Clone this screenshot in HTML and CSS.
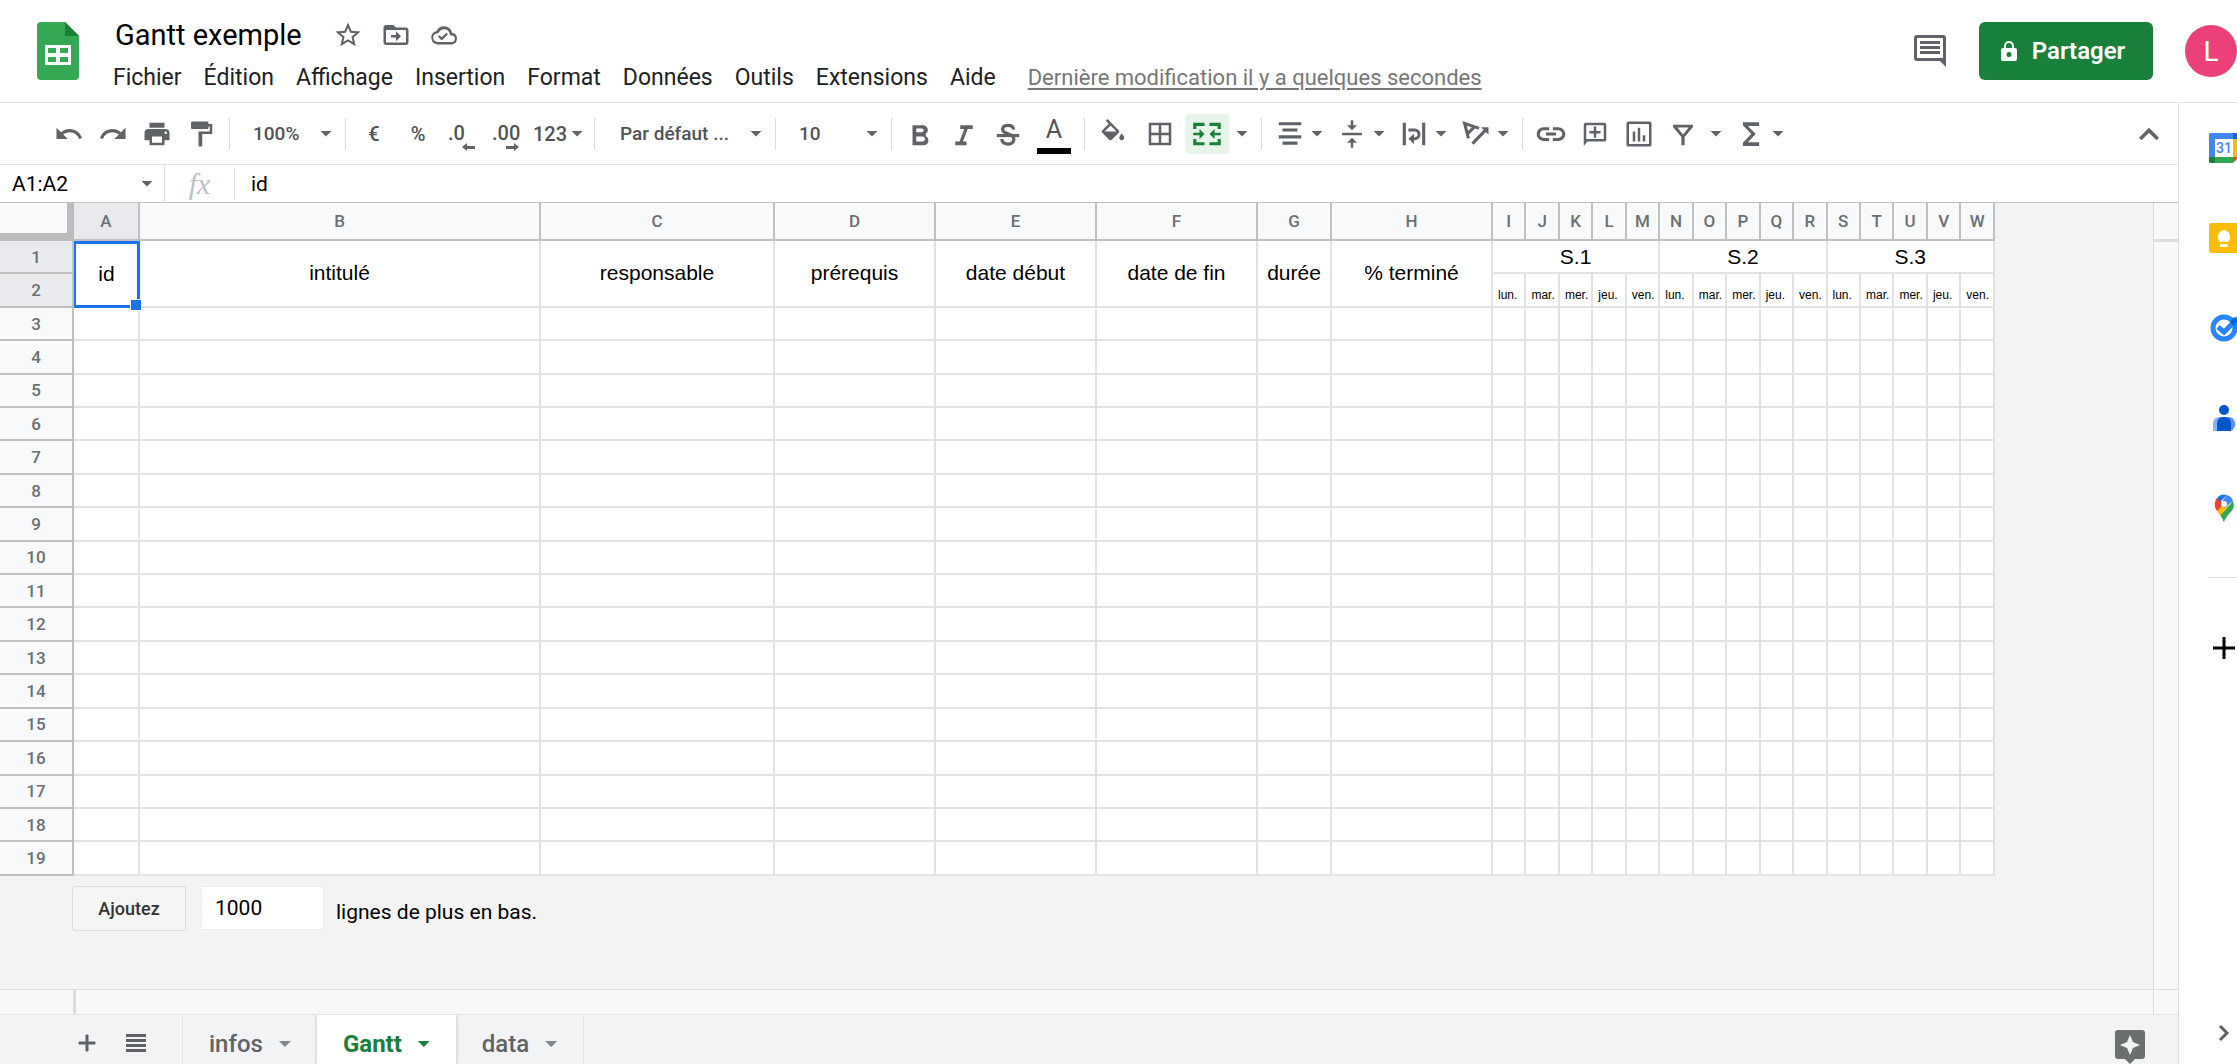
FILE: index.html
```html
<!DOCTYPE html>
<html lang="fr">
<head>
<meta charset="utf-8">
<title>Gantt exemple</title>
<link rel="stylesheet" href="styles.css">
</head>
<body>
<header class="header">
  <svg class="logo" viewBox="0 0 42 58" aria-hidden="true"><path fill="#34a853" d="M4 0h24l14 14v40a4 4 0 0 1-4 4H4a4 4 0 0 1-4-4V4a4 4 0 0 1 4-4z"/><path fill="#188038" d="M28 0l14 14H28z"/><path fill="#fff" d="M8 23h26v20H8zM11 26v5h8v-5zm12 0v5h8v-5zM11 35v5h8v-5zm12 0v5h8v-5z" fill-rule="evenodd"/></svg>
  <div class="doc">
    <div class="doc-title">
      <input class="title" type="text" value="Gantt exemple" aria-label="Nom du document">
      <button class="plain" aria-label="Suivre"><svg class="icon" viewBox="0 0 24 24"><path d="M22 9.240l-7.190-.620L12 2 9.190 8.630 2 9.240l5.460 4.730L5.820 21 12 17.270 18.180 21l-1.630-7.030L22 9.240zM12 15.400l-3.760 2.270 1-4.280-3.320-2.880 4.380-.380L12 6.100l1.710 4.040 4.380.380-3.320 2.880 1 4.280L12 15.400z"/></svg></button>
      <button class="plain" aria-label="Déplacer"><svg class="icon" viewBox="0 0 24 24"><path d="M20 6h-8l-2-2H4c-1.100 0-2 .9-2 2v12c0 1.100.9 2 2 2h16c1.100 0 2-.9 2-2V8c0-1.100-.9-2-2-2zm0 12H4V8h16v10zm-8-1l4-4-4-4v3H8v2h4z"/></svg></button>
      <button class="plain" aria-label="État du document"><svg class="icon" viewBox="0 0 24 24"><path d="M18.500 10.200A6.800 6.800 0 0 0 12 5a6.800 6.800 0 0 0-6 3.700A5.500 5.500 0 0 0 6.800 19.500h11.400a4.700 4.700 0 0 0 .3-9.300zM18 17.500H7a3.500 3.500 0 0 1-.3-7l.9-.1.4-.8A4.700 4.700 0 0 1 16.600 11l.3 1.200 1.300.1A2.600 2.600 0 0 1 18 17.500zm-7.800-3.700l-1.700-1.700-1.300 1.300 3 3 5-5-1.300-1.300z"/></svg></button>
    </div>
    <nav class="menus">
      <button class="menu">Fichier</button><button class="menu">Édition</button><button class="menu">Affichage</button><button class="menu">Insertion</button><button class="menu">Format</button><button class="menu">Données</button><button class="menu">Outils</button><button class="menu">Extensions</button><button class="menu">Aide</button>
      <a class="last-edit" href="#">Dernière modification il y a quelques secondes</a>
    </nav>
  </div>
  <div class="account">
    <button class="plain" aria-label="Commentaires"><svg class="icon-comments" viewBox="0 0 32 32"><path fill-rule="evenodd" d="M3 0h26a3 3 0 0 1 3 3v29l-6-6H3a3 3 0 0 1-3-3V3a3 3 0 0 1 3-3zm0 3v20h26V3zM6 6h20v3H6zm0 5h20v3H6zm0 5h20v3H6z"/></svg></button>
    <button class="share"><svg class="icon-lock" viewBox="0 0 16 20"><path fill-rule="evenodd" d="M2 7h1V5a5 5 0 0 1 10 0v2h1a2 2 0 0 1 2 2v9a2 2 0 0 1-2 2H2a2 2 0 0 1-2-2V9a2 2 0 0 1 2-2zm3 0h6V5a3 3 0 0 0-6 0zm3 4a2 2 0 1 0 0 5 2 2 0 0 0 0-5z"/></svg>Partager</button>
    <button class="avatar" aria-label="Compte">L</button>
  </div>
</header>

<div class="workspace">
  <main class="editor">
    <div class="toolbar">
      <button class="tool" aria-label="Annuler"><svg class="icon" viewBox="0 0 24 24"><path d="M12.500 8c-2.650 0-5.050.99-6.900 2.600L2 7v9h9l-3.620-3.620c1.390-1.160 3.160-1.880 5.120-1.880 3.540 0 6.550 2.310 7.600 5.500l2.370-.78C21.080 11.030 17.150 8 12.500 8z"/></svg></button>
      <button class="tool" aria-label="Rétablir"><svg class="icon" viewBox="0 0 24 24"><path d="M18.400 10.600C16.550 8.990 14.150 8 11.500 8c-4.650 0-8.580 3.030-9.960 7.220L3.900 16c1.050-3.190 4.050-5.500 7.600-5.500 1.950 0 3.730.72 5.120 1.880L13 16h9V7l-3.600 3.600z"/></svg></button>
      <button class="tool" aria-label="Imprimer"><svg class="icon" viewBox="0 0 24 24"><path d="M19 8H5c-1.660 0-3 1.340-3 3v6h4v4h12v-4h4v-6c0-1.660-1.340-3-3-3zm-3 11H8v-5h8v5zm3-7c-.55 0-1-.45-1-1s.45-1 1-1 1 .45 1 1-.45 1-1 1zm-1-9H6v4h12V3z"/></svg></button>
      <button class="tool" aria-label="Copier la mise en forme"><svg class="icon" viewBox="0 0 24 24"><path d="M18 4V3c0-.55-.45-1-1-1H5c-.55 0-1 .45-1 1v4c0 .55.45 1 1 1h12c.55 0 1-.45 1-1V6h1v4H10v11c0 .55.45 1 1 1h1c.55 0 1-.45 1-1v-9h8V4h-3z"/></svg></button>
      <span class="sep"></span>
      <span class="picker picker-short"><select aria-label="Zoom"><option>100%</option></select></span>
      <span class="sep"></span>
      <button class="tool">€</button>
      <button class="tool">%</button>
      <button class="tool tool-decimal" aria-label="Moins de décimales">.0<svg class="icon-arrow" viewBox="0 0 14 8"><path d="M0 4l5-4v3h8v3H5v2z"/></svg></button>
      <button class="tool tool-decimal" aria-label="Plus de décimales">.00<svg class="icon-arrow" viewBox="0 0 14 8"><path d="M13 4L8 0v3H0v3h8v2z"/></svg></button>
      <button class="tool tool-format">123<span class="caret"></span></button>
      <span class="sep"></span>
      <span class="picker picker-long"><select aria-label="Police"><option>Par défaut ...</option></select></span>
      <span class="sep"></span>
      <span class="picker picker-short"><select aria-label="Taille de police"><option>10</option></select></span>
      <span class="sep"></span>
      <button class="tool" aria-label="Gras"><svg class="icon" viewBox="0 0 24 24"><path d="M16.600 11.790c.97-.67 1.650-1.770 1.650-2.790 0-2.260-1.750-4-4-4H6v16h9.040c2.090 0 3.710-1.700 3.710-3.790 0-1.520-.86-2.820-2.150-3.420zM9 7.500h4.500c.83 0 1.500.67 1.500 1.500s-.67 1.500-1.500 1.500H9v-3zm5 10.500H9v-4h5c1.100 0 2 .9 2 2s-.9 2-2 2z"/></svg></button>
      <button class="tool" aria-label="Italique"><svg class="icon" viewBox="0 0 24 24"><path d="M9 5v3h3.200l-3.800 10H5v3h9v-3h-2.800L15 8h4V5z"/></svg></button>
      <button class="tool" aria-label="Barré"><svg class="icon" viewBox="0 0 24 24"><path d="M3 12h18v2.500H3z"/><path fill="none" stroke="#5f6368" stroke-width="2.600" d="M16.500 8.500C16.300 6 14.500 5 12 5 9.400 5 7.700 6.200 7.700 8.200c0 2 1.800 3 4.300 3.600 3 .8 4.700 2 4.700 4.400 0 2.400-2 3.800-4.700 3.800-3 0-4.800-1.300-5-4"/></svg></button>
      <button class="tool tool-color" aria-label="Couleur du texte">A</button>
      <span class="sep"></span>
      <button class="tool" aria-label="Couleur de remplissage"><svg class="icon" viewBox="0 0 24 24"><path d="M16.560 8.940L7.620 0 6.210 1.410l2.380 2.380-5.150 5.150c-.59.59-.59 1.540 0 2.120l5.500 5.500c.29.29.68.44 1.060.44s.77-.15 1.060-.44l5.500-5.500c.59-.58.59-1.530 0-2.120zM5.210 10L10 5.210 14.790 10H5.210zM19 11.500s-2 2.170-2 3.500c0 1.100.9 2 2 2s2-.9 2-2c0-1.330-2-3.500-2-3.500z"/></svg></button>
      <button class="tool tool-wide" aria-label="Bordures"><svg class="icon" viewBox="0 0 24 24"><path fill-rule="evenodd" d="M3 3h18v18H3zM5 5v6h6V5zm8 0v6h6V5zM5 13v6h6v-6zm8 0v6h6v-6z"/></svg></button>
      <button class="tool tool-active" aria-label="Fusionner les cellules"><svg class="icon" viewBox="0 0 24 24"><path d="M1 3h9v2.500H3.500V8H1zM14 3h9v5h-2.500V5.500H14zM1 16h2.500v2.500H10V21H1zM20.500 16H23v5h-9v-2.500h6.500zM1 11h5V8l4 4-4 4v-3H1zM23 11h-5V8l-4 4 4 4v-3h5z"/></svg></button>
      <button class="tool tool-caret" aria-label="Type de fusion"><span class="caret"></span></button>
      <span class="sep"></span>
      <button class="tool tool-drop" aria-label="Alignement horizontal"><svg class="icon" viewBox="0 0 24 24"><path d="M3 2.500h18V5H3zM6 7.500h12V10H6zM3 13h18v2.500H3zM6 18h12v2.500H6z"/></svg><span class="caret"></span></button>
      <button class="tool tool-drop" aria-label="Alignement vertical"><svg class="icon" viewBox="0 0 24 24"><path d="M8 19h3v4h2v-4h3l-4-4-4 4zm8-14h-3V1h-2v4H8l4 4 4-4zM4 11v2h16v-2H4z"/></svg><span class="caret"></span></button>
      <button class="tool tool-drop" aria-label="Retour à la ligne"><svg class="icon" viewBox="0 0 24 24"><path d="M3 3h2.500v18H3zM18.500 3H21v18h-2.500zM7.500 7.500h5a4.200 4.200 0 0 1 0 9.400H12V20l-4.500-4.300 4.500-4v2.800h.5a2.300 2.300 0 0 0 0-4.600h-5z"/></svg><span class="caret"></span></button>
      <button class="tool tool-drop" aria-label="Rotation du texte"><svg class="icon" viewBox="0 0 24 24"><path fill="none" stroke="#5f6368" stroke-width="2.400" d="M6 15.500L2.800 3.400 14.500 7.500M5.500 11.500l5-5"/><path d="M22 6.500v6l-2.100-2.100-9.800 10.200-1.800-1.800L18.100 8.600 16 6.500z"/></svg><span class="caret"></span></button>
      <span class="sep"></span>
      <button class="tool" aria-label="Insérer un lien"><svg class="icon" viewBox="0 0 24 24"><path d="M3 12c0-1.710 1.390-3.100 3.100-3.100h4.400V6.500h-4.400C3.060 6.500.6 8.960.6 12s2.460 5.500 5.500 5.500h4.400v-2.400H6.100C4.390 15.100 3 13.710 3 12zm5 1.200h8v-2.400H8v2.400zm9.900-6.700h-4.400v2.400h4.400c1.710 0 3.100 1.390 3.100 3.100s-1.390 3.100-3.100 3.100h-4.400v2.400h4.400c3.040 0 5.500-2.460 5.500-5.500s-2.460-5.500-5.500-5.500z"/></svg></button>
      <button class="tool" aria-label="Insérer un commentaire"><svg class="icon" viewBox="0 0 24 24"><path fill-rule="evenodd" d="M4.500 3h15A1.500 1.500 0 0 1 21 4.500v12a1.500 1.500 0 0 1-1.500 1.500H6l-3 3.500v-17A1.500 1.500 0 0 1 4.500 3zM5 5v11h14V5zm6 1h2v3.500h3.500v2H13V15h-2v-3.500H7.500v-2H11z"/></svg></button>
      <button class="tool" aria-label="Insérer un graphique"><svg class="icon" viewBox="0 0 24 24"><path fill-rule="evenodd" d="M3.500 2h17A1.500 1.500 0 0 1 22 3.500v17a1.500 1.500 0 0 1-1.500 1.500h-17A1.500 1.500 0 0 1 2 20.500v-17A1.500 1.500 0 0 1 3.500 2zM4 4v16h16V4zm3 6h2v8H7zm4-3h2v11h-2zm4 6h2v5h-2z"/></svg></button>
      <button class="tool tool-filter" aria-label="Créer un filtre"><svg class="icon" viewBox="0 0 24 24"><path fill-rule="evenodd" d="M4 4.500h16v1.800l-6.700 8v6.700h-2.600v-6.700L4 6.300zm3.500 2.200l4.500 5.600 4.500-5.600z"/></svg><span class="caret"></span></button>
      <button class="tool tool-drop" aria-label="Fonctions"><svg class="icon" viewBox="0 0 24 24"><path d="M18.500 2.500h-13V5l6.700 7-6.700 7v2.500h13v-3H9.500l6.300-6.500-6.300-6.500h9z"/></svg><span class="caret"></span></button>
      <button class="tool tool-collapse" aria-label="Masquer les menus"><svg class="icon" viewBox="0 0 24 24"><path d="M12 7l-8 8 2 2 6-6 6 6 2-2z"/></svg></button>
    </div>

    <div class="formula-bar">
      <label class="name-box"><input type="text" value="A1:A2" aria-label="Plage"><span class="caret"></span></label>
      <span class="fx">fx</span>
      <input class="formula" type="text" value="id" aria-label="Formule">
    </div>

    <div class="sheet-area">
      <div class="sheet">
        <table class="grid">
          <colgroup><col class="w-index"><col class="w-a"><col class="w-b"><col class="w-c"><col class="w-day"><col class="w-day"><col class="w-day"><col class="w-g"><col class="w-day"><col span="15"></colgroup>
          <thead>
            <tr><th class="corner"></th><th class="picked">A</th><th>B</th><th>C</th><th>D</th><th>E</th><th>F</th><th>G</th><th>H</th><th>I</th><th>J</th><th>K</th><th>L</th><th>M</th><th>N</th><th>O</th><th>P</th><th>Q</th><th>R</th><th>S</th><th>T</th><th>U</th><th>V</th><th>W</th></tr>
          </thead>
          <tbody id="rows">
            <tr><th class="picked">1</th><td class="selected" rowspan="2">id<span class="handle"></span></td><td rowspan="2">intitulé</td><td rowspan="2">responsable</td><td rowspan="2">prérequis</td><td rowspan="2">date début</td><td rowspan="2">date de fin</td><td rowspan="2">durée</td><td rowspan="2">% terminé</td><td colspan="5">S.1</td><td colspan="5">S.2</td><td colspan="5">S.3</td></tr>
            <tr class="days"><th class="picked">2</th><td>lun.</td><td>mar.</td><td>mer.</td><td>jeu.</td><td>ven.</td><td>lun.</td><td>mar.</td><td>mer.</td><td>jeu.</td><td>ven.</td><td>lun.</td><td>mar.</td><td>mer.</td><td>jeu.</td><td>ven.</td></tr>
          </tbody>
        </table>
        <div class="add-rows">
          <button class="add">Ajoutez</button>
          <input class="count" id="count" type="text" value="1000">
          <label class="add-label" for="count">lignes de plus en bas.</label>
        </div>
      </div>
      <div class="scroll-y"></div>
      <div class="scroll-x"></div>
      <div class="scroll-corner"></div>
    </div>

    <footer class="tabs">
      <button class="plain" aria-label="Ajouter une feuille"><svg class="icon-tab" viewBox="0 0 20 20"><path d="M9 2h2v7h7v2h-7v7H9v-7H2V9h7z" stroke="#5f6368"/></svg></button>
      <button class="plain" aria-label="Toutes les feuilles"><svg class="icon-tab" viewBox="0 0 20 20"><path d="M0 1h20v3H0zM0 6h20v3H0zM0 11h20v3H0zM0 16h20v3H0z"/></svg></button>
      <div class="tab-list">
        <button class="tab">infos<span class="caret"></span></button>
        <button class="tab tab-current">Gantt<span class="caret"></span></button>
        <button class="tab">data<span class="caret"></span></button>
      </div>
      <button class="plain explore" aria-label="Explorer"><svg class="icon-explore" viewBox="0 0 30 34"><path fill-rule="evenodd" d="M3 0h24a3 3 0 0 1 3 3v23a3 3 0 0 1-3 3h-7l-5 5-5-5H3a3 3 0 0 1-3-3V3a3 3 0 0 1 3-3zm12 5l-3 7-7 3 7 3 3 7 3-7 7-3-7-3z"/></svg></button>
    </footer>
  </main>

  <aside class="side">
    <div class="apps">
      <button class="plain" aria-label="Agenda"><svg class="app-icon" viewBox="0 0 32 32"><path fill="#4285f4" d="M2 1h24v6H7v18H1V2z"/><path fill="#1967d2" d="M25 1h5l1 1v5h-6z"/><path fill="#fbbc04" d="M25 7h6v18h-6z"/><path fill="#34a853" d="M7 25h18v6H7z"/><path fill="#188038" d="M1 25h6v6H2l-1-1z"/><path fill="#ea4335" d="M25 25h6l-6 6z"/><text class="app-date" x="16" y="21">31</text></svg></button>
      <button class="plain" aria-label="Keep"><svg class="app-icon" viewBox="0 0 32 32"><rect x="1" y="1" width="31" height="30" rx="3" fill="#fbbc04"/><path fill="#fff" d="M16 8a7 7 0 0 0-4 12h8a7 7 0 0 0-4-12zM12 22h8v3h-8z"/></svg></button>
      <button class="plain" aria-label="Tasks"><svg class="app-icon" viewBox="0 0 32 32"><circle cx="16" cy="16" r="11" fill="none" stroke="#2684fc" stroke-width="5"/><path fill="none" stroke="#2684fc" stroke-width="5" d="M10 15l6 5L30 6"/><path fill="#0066da" d="M22 10l4-5 4 4-4 5z"/></svg></button>
      <button class="plain" aria-label="Contacts"><svg class="app-icon" viewBox="0 0 32 32"><circle cx="16" cy="8" r="5" fill="#0057cc"/><path fill="#8ab4f8" d="M11 15h8v14H5v-8a6 6 0 0 1 6-6z"/><path fill="#5a91f5" d="M14 15h7a6 6 0 0 1 6 6v2a6 6 0 0 1-6 6h-7z"/><path fill="#0057cc" d="M15 15h2a6 6 0 0 1 6 6v8H9v-8a6 6 0 0 1 6-6z"/></svg></button>
      <button class="plain" aria-label="Maps"><svg class="app-icon" viewBox="0 0 32 32"><path fill="#34a853" d="M25 9c2 6 0 9-4 13-2 2-3 4-4 6s-2 2-2 0c-1-2-2-4-3-5z"/><path fill="#fbbc04" d="M9 18l10-9 1 6-8 9c-1-2-2-4-3-6z"/><path fill="#ea4335" d="M9 6l7 6-7 7c-3-4-3-9 0-13z"/><path fill="#1a73e8" d="M9 6c3-4 7-4 10-3l-7 7z"/><path fill="#4285f4" d="M19 3c3 1 5 3 6 6l-9 7-3-5z"/><circle cx="16" cy="12" r="3" fill="#fff"/></svg></button>
    </div>
    <hr class="side-rule">
    <button class="plain" aria-label="Modules complémentaires"><svg class="app-icon" viewBox="0 0 32 32"><path fill="#000" d="M14.500 5h3v9.500H27v3h-9.500V27h-3v-9.500H5v-3h9.500z"/></svg></button>
    <button class="plain side-toggle" aria-label="Masquer le panneau"><svg class="app-icon" viewBox="0 0 32 32"><path fill="none" stroke="#5f6368" stroke-width="3" d="M12 9l7 7-7 7"/></svg></button>
  </aside>
</div>
<script src="rows.js"></script>
</body>
</html>
```
FILE: styles.css
```css
* { box-sizing: border-box; }

body {
  margin: 0;
  height: 100vh;
  display: flex;
  flex-direction: column;
  overflow: hidden;
  background: #fff;
  color: #202124;
  font-family: Roboto, "Liberation Sans", sans-serif;
  font-size: 22px;
}

button, input, select {
  font: inherit;
  color: inherit;
  border: 0;
  margin: 0;
  padding: 0;
  background: none;
}

svg { display: block; fill: #5f6368; flex: none; }
.icon { width: 30px; height: 30px; }
.plain { display: flex; align-items: center; justify-content: center; }

.caret {
  flex: none;
  width: 12px;
  height: 6px;
  background: #5f6368;
  clip-path: polygon(0 0, 100% 0, 50% 100%);
}

/* Header */
.header {
  flex: none;
  display: flex;
  height: 103px;
  padding-left: 37px;
  border-bottom: 1px solid #e4e5e7;
}
.logo { width: 42px; height: 58px; margin-top: 22px; }
.doc { flex: 1; padding: 17px 0 0 34px; }
.doc-title { display: flex; align-items: center; gap: 18px; height: 36px; }
.title { width: 202px; height: 36px; font-size: 29px; color: #000; padding-left: 2px; }
.menus { display: flex; align-items: center; gap: 22px; height: 48px; color: #202124; }
.menu { font-size: 23px; }
.last-edit { margin-left: 10px; color: #777; text-underline-offset: 3px; }
.account { display: flex; align-items: center; height: 102px; }
.icon-comments { width: 32px; height: 32px; margin-right: 33px; }
.share {
  display: flex;
  align-items: center;
  justify-content: center;
  gap: 15px;
  width: 174px;
  height: 58px;
  margin-right: 32px;
  padding-right: 6px;
  border-radius: 6px;
  background: #188038;
  color: #fff;
  font-size: 24px;
  font-weight: 600;
}
.icon-lock { width: 16px; height: 20px; fill: #fff; }
.avatar { width: 52px; height: 52px; border-radius: 50%; background: #ec407a; color: #fff; font-size: 28px; }

/* Page body */
.workspace { flex: 1; display: flex; min-height: 0; }
.editor { flex: 1; display: flex; flex-direction: column; min-width: 0; }

/* Toolbar */
.toolbar {
  flex: none;
  display: flex;
  align-items: center;
  height: 62px;
  padding-left: 47px;
  border-bottom: 1px solid #e1e2e5;
  font-size: 20px;
  font-weight: 500;
  color: #505357;
}
.sep { flex: none; width: 1px; height: 32px; margin: 0 6px; background: #dadce0; }
.tool { flex: none; display: flex; align-items: center; justify-content: center; width: 44px; height: 40px; }
.tool-decimal { flex-direction: column; align-items: flex-start; padding: 6px 8px 0; line-height: 20px; }
.icon-arrow { width: 14px; height: 8px; align-self: flex-end; }
.tool-format { width: 60px; gap: 4px; }
.tool-color { width: 48px; font-size: 25px; font-weight: 400; background: linear-gradient(#000, #000) center bottom / 34px 6px no-repeat; line-height: 28px; padding-bottom: 8px; }
.tool-wide { width: 50px; }
.tool-active { background: #e6f4ea; border-radius: 4px 0 0 4px; }
.tool-active svg { fill: #188038; }
.tool-caret { width: 26px; }
.tool-drop { width: 62px; gap: 6px; }
.tool-filter { width: 68px; gap: 12px; }
.tool-collapse { margin-left: auto; margin-right: 7px; }
.picker { flex: none; display: grid; align-items: center; font-size: 19px; }
.picker select { grid-area: 1 / 1; appearance: none; height: 40px; padding-left: 17px; }
.picker::after {
  content: "";
  grid-area: 1 / 1;
  justify-self: end;
  width: 12px;
  height: 6px;
  margin-right: 7px;
  background: #5f6368;
  clip-path: polygon(0 0, 100% 0, 50% 100%);
  pointer-events: none;
}
.picker-short { width: 103px; }
.picker-long { width: 168px; }
.picker-long select { padding-left: 19px; }

/* Formula bar */
.formula-bar {
  flex: none;
  display: flex;
  align-items: center;
  height: 38px;
  border-bottom: 1px solid #c0c0c0;
  color: #000;
  font-size: 21px;
}
.name-box { display: flex; align-items: center; width: 165px; height: 37px; padding: 0 11px 0 12px; border-right: 1px solid #dadce0; }
.name-box input { flex: 1; min-width: 0; }
.fx { width: 70px; border-right: 1px solid #dadce0; text-align: center; font: italic 30px/30px "Liberation Serif", serif; color: #bdc1c6; }
.formula { flex: 1; padding-left: 16px; }

/* Sheet */
.sheet-area {
  flex: 1;
  display: grid;
  grid-template: minmax(0, 1fr) 25px / minmax(0, 1fr) 25px;
  min-height: 0;
  background: #f3f3f3;
}
.sheet { overflow: hidden; }
.scroll-y { background: linear-gradient(#dadce0, #dadce0) 0 36px / 100% 3px no-repeat #f8f8f8; border-left: 1px solid #dadce0; }
.scroll-x { background: linear-gradient(#dadce0, #dadce0) 73px 0 / 3px 100% no-repeat #f8f8f8; border-top: 1px solid #dadce0; }
.scroll-corner { background: #f8f8f8; border: solid #dadce0; border-width: 1px 0 0 1px; }

.grid { width: 1995px; height: 673px; table-layout: fixed; border-collapse: separate; border-spacing: 0; background: #fff; }
.w-index { width: 74px; }
.w-a { width: 66px; }
.w-b { width: 401px; }
.w-c { width: 234px; }
.w-day { width: 161px; }
.w-g { width: 74px; }
.grid th, .grid td { padding: 0; border: solid #e2e2e2; border-width: 0 2px 2px 0; line-height: 24px; text-align: center; }
.grid th { background: #f8f9fa; border-color: #c0c0c0; color: #6b6f73; font-size: 17px; font-weight: 500; }
.grid thead th { height: 38px; }
.grid th.picked { background: #e8eaed; }
.grid th.corner { border-width: 0 7px 8px 0; border-color: #bcbcbc; }
.grid td { font-family: "Liberation Sans", Arial, sans-serif; font-size: 21px; color: #000; white-space: nowrap; }
.grid .days td { font-size: 12px; line-height: 16px; text-align: left; vertical-align: bottom; padding: 0 0 3px 5px; }
.grid td.selected { position: relative; border: 3px solid #1a73e8; border-left-width: 2px; }
.handle { position: absolute; right: -5px; bottom: -6px; width: 12px; height: 12px; border: 1px solid #fff; background: #1a73e8; }

.add-rows { display: flex; padding: 10px 0 0 72px; }
.add { width: 114px; height: 45px; border: 1px solid #dcdcdc; border-radius: 3px; background: #f5f5f5; color: #333; font-size: 18px; font-weight: 500; }
.count { width: 123px; height: 44px; margin: 0 12px 0 15px; padding-left: 13px; background: #fff; color: #000; font-size: 21px; border: 1px solid #eee; }
.add-label { padding-top: 14px; color: #000; font-size: 21px; line-height: 24px; }

/* Sheet tabs */
.tabs { flex: none; display: flex; height: 50px; padding-left: 77px; border-top: 1px solid #e3e4e6; background: #f1f3f4; overflow: hidden; }
.tabs .plain { padding-top: 6px; }
.icon-tab { width: 20px; height: 20px; margin-right: 29px; }
.tab-list { display: flex; margin-left: 7px; border: solid #e3e4e6; border-width: 0 1px; }
.tab { display: flex; align-items: center; gap: 16px; height: 50px; padding: 8px 26px 0; color: #5f6368; font-size: 24px; font-weight: 500; }
.tab .caret { background: #80868b; }
.tab-current { background: #fff; color: #188038; font-weight: 700; box-shadow: 0 0 4px #b8babd; }
.tab-current .caret { background: #188038; }
.explore { margin-left: auto; margin-right: 33px; }
.icon-explore { width: 30px; height: 34px; margin-top: 9px; fill: #6b6f6e; }

/* Side panel */
.side { flex: none; display: flex; flex-direction: column; align-items: flex-start; width: 59px; padding: 29px 0 15px 29px; border-left: 1px solid #dadce0; overflow: hidden; }
.apps { display: flex; flex-direction: column; gap: 58px; }
.app-icon { width: 32px; height: 32px; }
.app-date { font: 500 14px Roboto, sans-serif; fill: #4285f4; text-anchor: middle; }
.side-rule { width: 58px; margin: 53px 0 54px; border: 0; border-top: 1px solid #dadce0; }
.side-toggle { margin-top: auto; }
```
FILE: rows.js
```js
// Appends the empty rows 3 to 19 under the two heading rows.
const body = document.getElementById("rows");
for (let n = 3; n <= 19; n++) {
  const row = body.insertRow();
  const head = document.createElement("th");
  head.textContent = n;
  row.append(head);
  for (let c = 0; c < 23; c++) row.insertCell();
}
```
